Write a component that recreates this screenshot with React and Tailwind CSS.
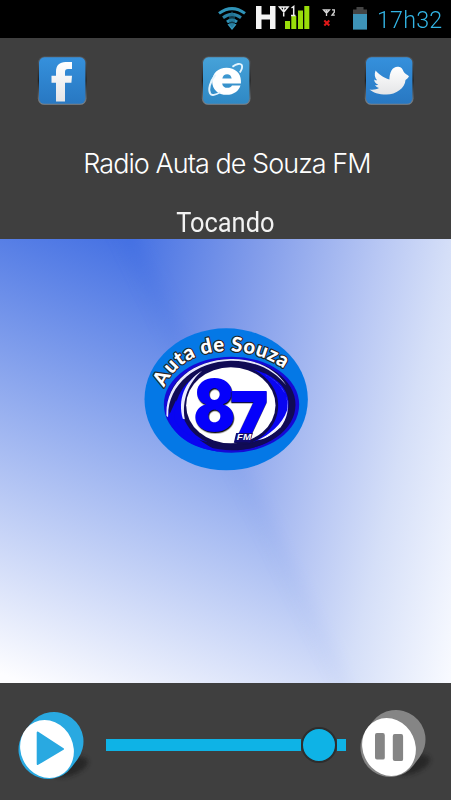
function StatusBar() {
  return (
    <div className="flex h-[38px] items-center bg-black pl-[217px]">
      <svg className="h-[38px] w-[160px] shrink-0" viewBox="217 0 160 38">
        <g fill="none" stroke="#2f93b8" strokeWidth="3">
          <path d="M219 13.4 Q232 3.800 245 13.400" />
          <path d="M223 17.800 Q232 11 241 17.800" stroke="#2a82a6" />
          <path d="M227 22 Q232 18 237 22" />
        </g>
        <path d="M227.500 24.500 Q232 21.500 236.500 24.500 L232 30 Z" fill="#3599be" />
        <path d="M232 11 l3 5 v8 l-3 4 l-3 -4 v-8 Z" fill="#1d6684" opacity=".55" />
        <path d="M256 6h5.500v8.500h8.500V6h5.500v23H270v-9.500h-8.500V29H256z" fill="#f4f4f4" />
        <g fill="#99dc0a">
          <rect x="285" y="21" width="5" height="8" />
          <rect x="291.300" y="16" width="5" height="13" />
          <rect x="298" y="10.500" width="5" height="18.500" />
          <rect x="304.300" y="6" width="5" height="23" />
        </g>
        <path d="M279.500 7h8.500l-4.200 5zM283.700 7v9.500M291.500 8l2.200-1.500v9M291 15.500h4.500" fill="none" stroke="#eee" strokeWidth="1.500" />
        <path d="M323.500 9.800h6l-3 3.400zM326.500 9.500v6.500M332 9.800h2.300v2.400l-2.300 3h2.800" fill="none" stroke="#d6d6d6" strokeWidth="1.300" />
        <path d="M324.300 20.500l5 5M329.300 20.500l-5 5" stroke="#e01818" strokeWidth="2" />
        <path d="M356.500 7h7v2.500h3.500v5h-14v-5h3.500z" fill="#444" />
        <rect x="353" y="14" width="14" height="15.600" fill="#3d93b8" />
      </svg>
      <span className="origin-left scale-x-[0.97] pt-[1px] font-['Roboto',sans-serif] text-[24px] leading-none font-light tracking-[0.2px] text-[#33b5e5]">
        17h32
      </span>
    </div>
  );
}

function SocialTile({ id, top, bottom, children }) {
  return (
    <svg className="h-[50px] w-[50px]" viewBox="0 0 50 50">
      <defs>
        <linearGradient id={id} x1="0" y1="0" x2="0" y2="1">
          <stop offset="0" stopColor={top} />
          <stop offset="1" stopColor={bottom} />
        </linearGradient>
        <linearGradient id={id + "-edge"} x1="0" y1="0" x2="0" y2="1">
          <stop offset="0" stopColor="#575b60" />
          <stop offset=".5" stopColor="#202020" />
          <stop offset="1" stopColor="#7f8890" />
        </linearGradient>
        <linearGradient id={id + "-ink"} x1="0" y1="0" x2="0" y2="1">
          <stop offset="0" stopColor="#fff" />
          <stop offset="1" stopColor="#e4e5e7" />
        </linearGradient>
      </defs>
      <rect x=".8" y=".5" width="48.800" height="48.300" rx="6.500" fill={"url(#" + id + "-edge)"} />
      <rect x="2" y="1.300" width="46.400" height="46.500" rx="5.500" fill={"url(#" + id + ")"} />
      {children}
    </svg>
  );
}

function Header() {
  return (
    <header className="flex h-[201px] flex-col items-center bg-[#3f3f3f] pt-[18px]">
      <div className="flex w-[377px] justify-between">
        <SocialTile id="fb" top="#3590dc" bottom="#2878c2">
          <path
            d="M19 45.500V26.800h-4.500v-7H19v-4.200c0-6.200 3.600-9.600 9.500-9.600h6.500v7h-4c-2.200 0-3 1-3 3v3.800h7l-.6 7H28v18.700z"
            fill="url(#fb-ink)"
          />
        </SocialTile>
        <SocialTile id="ie" top="#46a2d9" bottom="#2f88c4">
          <g transform="translate(-2.500 -2.500) scale(1.06)">
            <path
              fillRule="evenodd"
              d="M26.500 13.500c8 0 13.500 5.300 13.500 12v2.700H22.300c.4 2.800 2.300 4.200 5 4.200 2 0 3.600-.7 4.300-2.200h8c-1.600 5.300-6.500 8.800-13 8.800-8 0-13.700-5.300-13.700-12.700s5.600-12.800 13.600-12.800zM22.500 23.500h8.800c-.4-2.600-1.900-4-4.300-4s-4.100 1.400-4.500 4z"
              fill="#fff"
            />
            <path d="M32 12.500c4-3 7.500-3.500 8.800-1.700.8 1.500-.1 4.500-1.800 7.200M16 20C10.500 27 9 34 11 37.800c1.300 2.200 5 1.500 9.500-1.200" fill="none" stroke="#e4f4fd" strokeWidth="1.800" />
          </g>
        </SocialTile>
        <SocialTile id="tw" top="#3590dc" bottom="#2878c2">
          <path
            d="M45 20.200c-1 2-2.100 2.900-3.500 3.700C41 32 32 38.500 22.500 38.500 14.500 38.500 9 36.500 5.500 33.500c3.500.5 7 .2 9.500-1.500-1.500-.3-3.200-1.500-3.900-3 1.200.3 2.300.1 3.200-.2-2.800-1.300-4-3.100-4.100-5.400 1 .6 1.800.8 2.900.8-2.500-2.600-3-6-1.500-9.800 2.600 3.500 7.600 7 13.800 9.100 0-2.700.5-6.200 2.200-9.200 1.500-2.500 4.300-4 7-3.500 2.600.5 4.200 2.300 4.800 4.500 1 2 3.600 3.500 5.600 4.900z"
            fill="url(#tw-ink)"
          />
        </SocialTile>
      </div>
      <h1 className="mt-[43px] h-[30px] translate-x-[1.500px] font-['Inter','Liberation_Sans',sans-serif] text-[27px] leading-[30px] font-light tracking-[-0.96px] whitespace-nowrap text-white">
        Radio Auta de Souza FM
      </h1>
      <p className="mt-[29px] h-[30px] scale-x-[0.94] font-['Roboto',sans-serif] text-[27px] leading-[30px] text-[#f2f2f2]">Tocando</p>
    </header>
  );
}

function Backdrop() {
  return (
    <svg className="absolute inset-0 h-full w-full overflow-hidden" viewBox="0 0 451 444" preserveAspectRatio="none">
      <defs>
        <linearGradient id="sweepLeft" gradientUnits="userSpaceOnUse" x1="130" y1="0" x2="-26" y2="425">
          <stop offset="0" stopColor="#4571e3" />
          <stop offset="1" stopColor="#fdfdff" />
        </linearGradient>
        <linearGradient id="sweepRight" gradientUnits="userSpaceOnUse" x1="130" y1="0" x2="531" y2="95">
          <stop offset="0" stopColor="#4571e3" />
          <stop offset=".3" stopColor="#809bea" />
          <stop offset=".6" stopColor="#b9c8f4" />
          <stop offset=".76" stopColor="#d5dff8" />
          <stop offset="1" stopColor="#f8faff" />
        </linearGradient>
        <filter id="seam" filterUnits="userSpaceOnUse" x="-80" y="-80" width="640" height="620">
          <feGaussianBlur stdDeviation="9" />
        </filter>
        <mask id="rightSide" maskUnits="userSpaceOnUse" x="0" y="0" width="451" height="444">
          <path d="M91 -80H560V540H391z" fill="#fff" filter="url(#seam)" />
          <rect x="400" width="60" height="444" fill="#fff" />
        </mask>
      </defs>
      <rect width="451" height="444" fill="url(#sweepLeft)" />
      <rect width="451" height="444" fill="url(#sweepRight)" mask="url(#rightSide)" />
    </svg>
  );
}

function StationLogo() {
  return (
    <svg className="relative h-[160px] w-[180px] -translate-x-[0.500px]" viewBox="0 0 540 480">
      <defs>
        <path id="nameArc" d="M87 203 C118 128 192 93 278 94 C345 95 400 113 454 152" />
      </defs>
      <ellipse cx="272" cy="238" rx="245" ry="213" fill="#0478e6" />
      <ellipse cx="288" cy="254" rx="203" ry="144" fill="#1509d6" />
      <ellipse cx="289" cy="254" rx="191" ry="137" fill="#100b55" />
      <path d="M93 288C88 190 170 120 285 117C365 115 425 150 452 196C420 155 365 121 285 122C180 125 95 194 98 292z" fill="#e9eaff" />
      <path d="M98 292L122 240L160 330C180 355 220 380 250 395C165 385 112 345 98 292z" fill="#0905f2" />
      <path d="M118 298C112 205 180 141 285 141C390 141 459 190 459 252C459 318 395 368 300 374C210 376 140 350 118 298z" fill="#0905f2" />
      <ellipse cx="283" cy="257" rx="145" ry="124" fill="#100b55" />
      <path d="M385 162C455 195 480 264 434 324C417 342 395 355 366 361C400 345 440 315 455 270C462 226 435 185 385 162z" fill="#f4f4ff" />
      <path d="M142 296C126 240 146 184 200 152C160 186 138 240 148 298z" fill="#e9eaff" />
      <path d="M168 322C225 385 360 400 435 322C400 400 245 420 168 322z" fill="#100b55" />
      <ellipse cx="286" cy="256" rx="134" ry="114" fill="#fff" />
      <g fontFamily="Inter, 'Liberation Sans', sans-serif" fontWeight="900">
        <text x="173" y="332" fontSize="216" textLength="127" lengthAdjust="spacingAndGlyphs" fill="#0500fb" className="drop-shadow-[2px_4px_1px_#111111]">8</text>
        <text x="283" y="367" fontSize="211" textLength="116" lengthAdjust="spacingAndGlyphs" fill="#0500fb" className="drop-shadow-[-1px_3px_1px_#111111]">7</text>
      </g>
      <path d="M302 339h50l-8 29h-49z" fill="#100b70" />
      <text x="304" y="361" fontFamily="'Liberation Sans', sans-serif" fontSize="25" fontWeight="700" fontStyle="italic" textLength="43" lengthAdjust="spacingAndGlyphs" fill="#fff">FM</text>
      <text fontFamily="Lato, sans-serif" fontSize="61" fontWeight="900" fill="#fff" stroke="#242424" strokeWidth="7" strokeLinejoin="round" paintOrder="stroke">
        <textPath href="#nameArc" textLength="412" lengthAdjust="spacing">Auta de Souza</textPath>
      </text>
    </svg>
  );
}

function RoundButton({ label, rim, children, shadowId }) {
  return (
    <button aria-label={label} className="block h-[74px] w-[76px] shrink-0">
      <svg className="h-full w-full" viewBox="0 0 76 74">
        <defs>
          <filter id={shadowId} x="-30%" y="-30%" width="160%" height="160%">
            <feGaussianBlur stdDeviation="2" />
          </filter>
        </defs>
        <ellipse cx="54" cy="56" rx="18" ry="8" transform="rotate(-22 54 56)" fill="#222" opacity=".8" filter={"url(#" + shadowId + ")"} />
        <path d="M31 38.500L37 30.500" stroke={rim} strokeWidth="59" strokeLinecap="round" />
        <ellipse cx="30" cy="38" rx="26.300" ry="29.500" transform="rotate(-25 30 38)" fill="#fff" />
        {children}
      </svg>
    </button>
  );
}

function Controls() {
  return (
    <footer className="flex h-[117px] items-start bg-[#3f3f3f] pl-[17px]">
      <div className="mt-[28px]">
        <RoundButton label="Play" rim="#29a9e1" shadowId="playShadow">
          <path d="M20.700 21.500L46 38L20.700 53z" fill="#29a9e1" stroke="#29a9e1" strokeWidth="2" strokeLinejoin="round" />
        </RoundButton>
      </div>
      <div className="mt-[43.500px] ml-[12.500px] flex h-[36px] w-[240px] items-center">
        <div className="h-[12px] w-[195px] bg-[#0eb3e6]" />
        <div className="h-[36px] w-[36px] shrink-0 rounded-full border-2 border-[#2d2d2d] bg-[#0eb3e6]" />
        <div className="h-[12px] w-[9px] bg-[#0eb3e6]" />
      </div>
      <div className="mt-[25.500px] ml-[13.500px]">
        <RoundButton label="Pause" rim="#858585" shadowId="pauseShadow">
          <rect x="16" y="23.500" width="9.800" height="26.500" rx="2" fill="#858585" transform="skewY(1.500)" />
          <rect x="33.800" y="24" width="10.300" height="27" rx="2" fill="#858585" transform="skewY(1.500)" />
        </RoundButton>
      </div>
    </footer>
  );
}

export default function App() {
  return (
    <div className="flex h-[800px] w-[451px] flex-col overflow-hidden bg-[#3f3f3f]">
      <StatusBar />
      <Header />
      <main className="relative flex h-[444px] justify-center pt-[81px]">
        <Backdrop />
        <StationLogo />
      </main>
      <Controls />
    </div>
  );
}
